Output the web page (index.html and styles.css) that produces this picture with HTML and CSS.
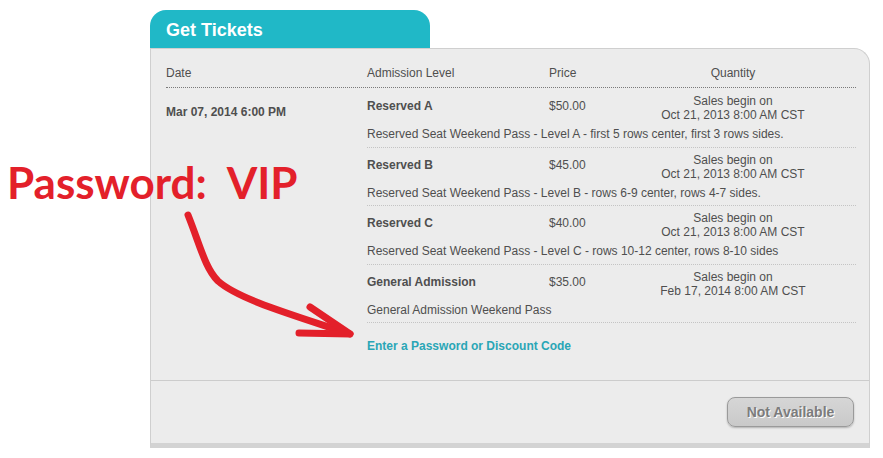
FILE: index.html
```html
<!DOCTYPE html>
<html>
<head>
<meta charset="utf-8">
<link rel="stylesheet" href="styles.css">
</head>
<body>
<div class="widget">
  <div class="tab">Get Tickets</div>
  <div class="panel">
    <div class="content">
      <div class="thead">
        <span>Date</span>
        <span>Admission Level</span>
        <span>Price</span>
        <span class="thq">Quantity</span>
      </div>
      <div class="tbody">
        <div class="date">Mar 07, 2014 6:00 PM</div>
        <div class="tickets">
          <div class="ticket first">
            <div class="tline">
              <div class="name">Reserved A</div>
              <div class="price">$50.00</div>
              <div class="qty">Sales begin on<br>Oct 21, 2013 8:00 AM CST</div>
            </div>
            <div class="desc">Reserved Seat Weekend Pass - Level A - first 5 rows center, first 3 rows sides.</div>
          </div>
          <div class="ticket">
            <div class="tline">
              <div class="name">Reserved B</div>
              <div class="price">$45.00</div>
              <div class="qty">Sales begin on<br>Oct 21, 2013 8:00 AM CST</div>
            </div>
            <div class="desc">Reserved Seat Weekend Pass - Level B - rows 6-9 center, rows 4-7 sides.</div>
          </div>
          <div class="ticket tall">
            <div class="tline">
              <div class="name">Reserved C</div>
              <div class="price">$40.00</div>
              <div class="qty">Sales begin on<br>Oct 21, 2013 8:00 AM CST</div>
            </div>
            <div class="desc">Reserved Seat Weekend Pass - Level C - rows 10-12 center, rows 8-10 sides</div>
          </div>
          <div class="ticket">
            <div class="tline">
              <div class="name">General Admission</div>
              <div class="price">$35.00</div>
              <div class="qty">Sales begin on<br>Feb 17, 2014 8:00 AM CST</div>
            </div>
            <div class="desc">General Admission Weekend Pass</div>
          </div>
          <a class="code" href="#">Enter a Password or Discount Code</a>
        </div>
      </div>
    </div>
    <div class="footer">
      <button class="btn" type="button">Not Available</button>
    </div>
  </div>
</div>

<div class="annot">Password:  VIP</div>
<svg class="arrow" width="883" height="458" viewBox="0 0 883 458">
  <path d="M188 215 C 200 245, 205 268, 218 281 C 238 299, 290 314, 350 334" fill="none" stroke="#e3202a" stroke-width="7" stroke-linecap="round"/>
  <path d="M310 307 L350 334 L299 333" fill="none" stroke="#e3202a" stroke-width="7" stroke-linecap="round" stroke-linejoin="round"/>
</svg>
</body>
</html>
```

FILE: styles.css
```css
html, body {
  margin: 0;
  padding: 0;
  background: #ffffff;
}
body {
  font-family: "Liberation Sans", Arial, sans-serif;
  font-size: 12px;
  color: #4f4f4f;
  width: 883px;
  height: 458px;
  position: relative;
  overflow: hidden;
}
.widget {
  margin: 10px 0 0 150px;
  width: 720px;
}
.tab {
  width: 264px;
  height: 38px;
  padding-left: 16px;
  background: #20b8c7;
  border-radius: 16px 16px 0 0;
  color: #ffffff;
  font-weight: bold;
  font-size: 18px;
  line-height: 41px;
  box-sizing: content-box;
}
.panel {
  background: #ececec;
  border: 1px solid #cfcfcf;
  border-bottom: 5px solid #d3d3d3;
  border-top-right-radius: 16px;
}
.content {
  padding: 0 13px 27px 15px;
}
.thead {
  display: grid;
  grid-template-columns: 201px 182px 61px 1fr;
  padding: 17px 0 7px 0;
  line-height: 14px;
  border-bottom: 1px dotted #7a7a7a;
}
.thq {
  text-align: center;
}
.tbody {
  display: flex;
}
.date {
  width: 201px;
  flex: none;
  font-weight: bold;
  line-height: 14px;
  padding-top: 17px;
}
.tickets {
  flex: 1;
  display: flex;
  flex-direction: column;
}
.ticket {
  padding: 5px 0 5px 0;
  border-bottom: 1px dotted #c4c4c4;
}
.ticket.first {
  padding-top: 6px;
  padding-bottom: 6px;
}
.ticket.tall {
  padding-bottom: 6px;
}
.tline {
  display: grid;
  grid-template-columns: 182px 61px 1fr;
  line-height: 14px;
}
.name {
  font-weight: bold;
  margin-top: 5px;
}
.price {
  margin-top: 5px;
}
.qty {
  text-align: center;
}
.desc {
  margin-top: 5px;
  line-height: 14px;
}
.code {
  display: block;
  margin-top: 16px;
  line-height: 14px;
  color: #2aa6b6;
  font-weight: bold;
  text-decoration: none;
}
.footer {
  border-top: 1px solid #cccccc;
  padding: 16px 15px 16px 0;
  display: flex;
  justify-content: flex-end;
}
.btn {
  width: 127px;
  height: 30px;
  border: 1px solid #9a9a9a;
  border-radius: 8px;
  background: linear-gradient(#d6d6d6, #c9c9c9);
  box-shadow: 0 1px 2px rgba(0,0,0,0.25);
  color: #7c7c7c;
  font-family: "Liberation Sans", Arial, sans-serif;
  font-weight: bold;
  font-size: 14px;
  text-shadow: 1px 1px 0 #ffffff;
  padding: 0;
}
.annot {
  position: absolute;
  left: 7px;
  top: 154px;
  color: #e3202a;
  font-family: Lato, "Open Sans", sans-serif;
  font-weight: bold;
  font-size: 44px;
  line-height: 56px;
  white-space: pre;
}
.arrow {
  position: absolute;
  left: 0;
  top: 0;
}
```
